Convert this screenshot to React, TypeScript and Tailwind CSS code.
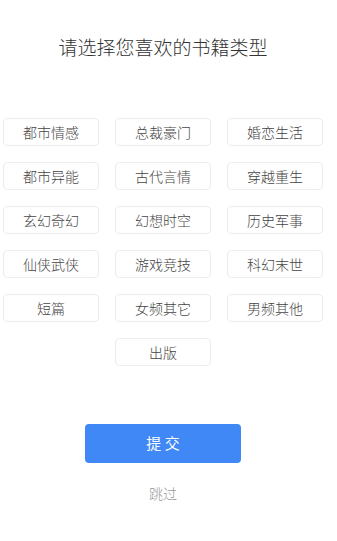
const tags = [
  "都市情感",
  "总裁豪门",
  "婚恋生活",
  "都市异能",
  "古代言情",
  "穿越重生",
  "玄幻奇幻",
  "幻想时空",
  "历史军事",
  "仙侠武侠",
  "游戏竞技",
  "科幻末世",
  "短篇",
  "女频其它",
  "男频其他",
];

export default function App() {
  return (
    <div
      className="flex h-[541px] w-[337px] flex-col bg-white"
      style={{ fontFamily: '"Noto Sans CJK SC", "Noto Sans", sans-serif' }}
    >
      <h1 className="mt-[34px] pr-[11px] text-center text-[19px] leading-[26px] font-light text-[#333]">
        请选择您喜欢的书籍类型
      </h1>

      <div className="mt-[58px] grid w-[323px] grid-cols-3 gap-4 pl-[3px]">
        {tags.map((t) => (
          <div
            key={t}
            className="flex h-[28px] w-[96px] items-center justify-center rounded border border-[#ececec] text-[14px] font-light text-[#444]"
          >
            {t}
          </div>
        ))}
        <div className="col-start-2 flex h-[28px] w-[96px] items-center justify-center rounded border border-[#ececec] text-[14px] font-light text-[#444]">
          出版
        </div>
      </div>

      <div className="mt-[58px] flex flex-col items-center pr-[11px]">
        <button className="h-[39px] w-[156px] rounded bg-[#3f88f6] text-[15px] text-white">
          提 交
        </button>
        <span className="mt-[20px] text-[14px] font-light text-[#999]">跳过</span>
      </div>
    </div>
  );
}
